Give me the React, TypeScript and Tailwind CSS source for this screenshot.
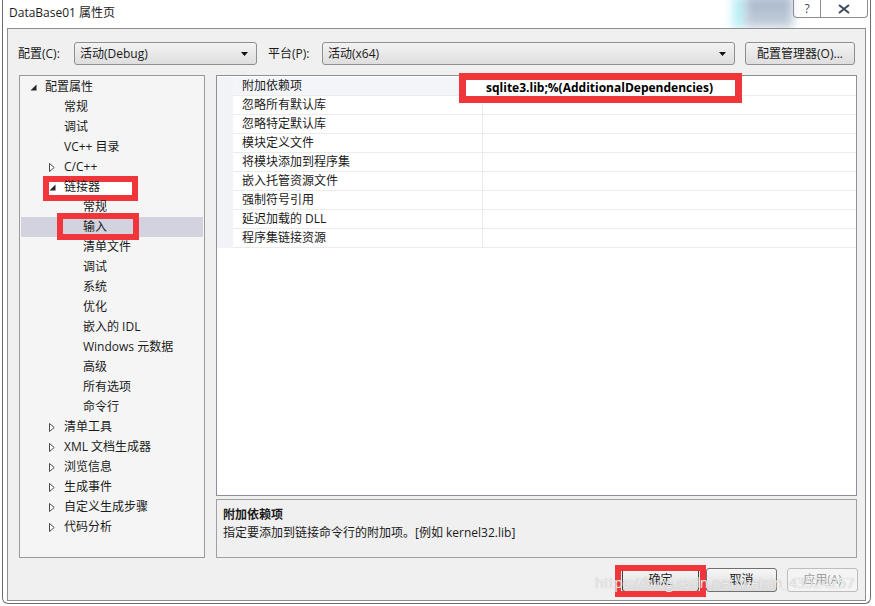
import React from "react";

type TreeNode = {
  label: string;
  level: 0 | 1 | 2;
  arrow?: "open" | "closed";
  selected?: boolean;
};

const tree: TreeNode[] = [
  { label: "配置属性", level: 0, arrow: "open" },
  { label: "常规", level: 1 },
  { label: "调试", level: 1 },
  { label: "VC++ 目录", level: 1 },
  { label: "C/C++", level: 1, arrow: "closed" },
  { label: "链接器", level: 1, arrow: "open" },
  { label: "常规", level: 2 },
  { label: "输入", level: 2, selected: true },
  { label: "清单文件", level: 2 },
  { label: "调试", level: 2 },
  { label: "系统", level: 2 },
  { label: "优化", level: 2 },
  { label: "嵌入的 IDL", level: 2 },
  { label: "Windows 元数据", level: 2 },
  { label: "高级", level: 2 },
  { label: "所有选项", level: 2 },
  { label: "命令行", level: 2 },
  { label: "清单工具", level: 1, arrow: "closed" },
  { label: "XML 文档生成器", level: 1, arrow: "closed" },
  { label: "浏览信息", level: 1, arrow: "closed" },
  { label: "生成事件", level: 1, arrow: "closed" },
  { label: "自定义生成步骤", level: 1, arrow: "closed" },
  { label: "代码分析", level: 1, arrow: "closed" },
];

const props = [
  "附加依赖项",
  "忽略所有默认库",
  "忽略特定默认库",
  "模块定义文件",
  "将模块添加到程序集",
  "嵌入托管资源文件",
  "强制符号引用",
  "延迟加载的 DLL",
  "程序集链接资源",
];

const indent = ["pl-[9px]", "pl-[28px]", "pl-[47px]"];

function Arrow({ kind }: { kind?: "open" | "closed" }) {
  if (kind === "open")
    return (
      <svg width="7" height="7" viewBox="0 0 7 7">
        <polygon points="6.5,0.5 6.5,6.5 0.5,6.5" fill="#262626" />
      </svg>
    );
  if (kind === "closed")
    return (
      <svg width="6" height="9" viewBox="0 0 6 9">
        <polygon points="0.5,0.5 5.2,4.5 0.5,8.5" fill="#fff" stroke="#4a4a4a" />
      </svg>
    );
  return null;
}

function Combo({ text, className }: { text: string; className: string }) {
  return (
    <div
      className={`flex h-[23px] items-center justify-between rounded-[3px] border border-[#8e8f8f] bg-gradient-to-b from-[#f3f3f3] to-[#dedede] pl-[5px] pr-[8px] ${className}`}
    >
      <span>{text}</span>
      <svg width="7" height="4" viewBox="0 0 7 4">
        <polygon points="0,0 7,0 3.5,4" fill="#111" />
      </svg>
    </div>
  );
}

export default function App() {
  return (
    <div className="relative h-[606px] w-[875px] overflow-hidden bg-white font-['Open_Sans','Noto_Sans_CJK_SC',sans-serif] text-[12px] leading-none text-[#1a1a1a]">
      {/* aero glass showing through behind the caption buttons */}
      <div className="absolute left-[732px] top-[-4px] h-[32px] w-[14px] bg-[#bdf1f6] blur-[4px]" />
      <div className="absolute left-[745px] top-[-4px] h-[32px] w-[48px] bg-gradient-to-b from-[#8fa3bd] to-[#b9c5d4] opacity-80 blur-[5px]" />

      <div className="relative ml-[2px] flex h-[604px] w-[869px] flex-col rounded-b-[6px] border-x border-b border-[#6d6d6d]">
        {/* title bar */}
        <div className="flex h-[28px] items-start justify-between pl-[6px]">
          <span className="mt-[7px] text-[12px]">DataBase01 属性页</span>
          <div className="relative mr-[2px] flex h-[18px] w-[75px] rounded-b-[4px] border-x border-b border-[#8a8d94] bg-white/60 text-[#3d4a5c]">
            <div className="flex w-[27px] items-center justify-center border-r border-[#8a8d94] text-[12px]">?</div>
            <div className="flex flex-1 items-center justify-center">
              <svg width="12" height="10" viewBox="0 0 12 10">
                <path d="M1 1 L11 9 M11 1 L1 9" stroke="#3d4a5c" strokeWidth="2" fill="none" />
              </svg>
            </div>
          </div>
        </div>

        {/* client area */}
        <div className="relative ml-[4px] flex h-[573px] w-[859px] flex-col border border-[#8e8f8f] bg-[#f0f0f0]">
          <div className="mt-[13px] flex h-[23px] items-center pl-[10px]">
            <span className="w-[56px]">配置(C):</span>
            <Combo text="活动(Debug)" className="w-[183px]" />
            <span className="ml-[11px] w-[54px]">平台(P):</span>
            <Combo text="活动(x64)" className="w-[413px]" />
            <div className="ml-[10px] flex h-[23px] w-[110px] items-center justify-center rounded-[3px] border border-[#8e8f8f] bg-gradient-to-b from-[#f3f3f3] to-[#dedede]">
              配置管理器(O)...
            </div>
          </div>

          <div className="mt-[10px] flex h-[483px] pl-[11px]">
            {/* category tree */}
            <div className="relative w-[186px] border border-[#9a9a9a] bg-[#f5f5f5] pt-[1px]">
              <div className="absolute left-[23px] top-[100px] h-[25px] w-[95px] border-[6px] border-[#f0363a] bg-white" />
              {tree.map((n, i) => (
                <div
                  key={i}
                  className={`relative ml-[1px] mr-[1px] flex h-[20px] items-center ${indent[n.level]} ${
                    n.selected ? "bg-[#d2d3de]" : ""
                  }`}
                >
                  <span className="flex w-[15px] items-center">
                    <Arrow kind={n.arrow} />
                  </span>
                  <span>{n.label}</span>
                </div>
              ))}
              <div className="absolute left-[37px] top-[137px] h-[27px] w-[82px] border-[6px] border-[#f0363a]" />
            </div>

            <div className="ml-[11px] flex w-[641px] flex-col">
              {/* property grid */}
              <div className="relative h-[421px] border border-[#8a8f98] bg-white pt-[1px]">
                {props.map((p, i) => (
                  <div key={p} className="flex h-[19px] items-stretch">
                    <div className="w-[16px] bg-[#f1f3f7]" />
                    <div
                      className={`flex w-[250px] items-center border-b border-r border-[#ececec] pl-[9px] ${
                        i === 0 ? "bg-[#f3f5f9]" : ""
                      }`}
                    >
                      {p}
                    </div>
                    <div className="flex-1 border-b border-[#ececec]" />
                  </div>
                ))}
                <div className="absolute left-[242px] top-[-3px] flex h-[30px] w-[283px] items-center border-[7px] border-[#f0363a] bg-white pl-[20px] text-[12px] font-bold text-black">
                  sqlite3.lib;%(AdditionalDependencies)
                </div>
              </div>

              {/* description */}
              <div className="mt-[3px] h-[59px] border border-[#a0a0a0] bg-[#f0f0f0] pl-[6px] pt-[6px] leading-[18px]">
                <div className="font-bold">附加依赖项</div>
                <div>指定要添加到链接命令行的附加项。[例如 kernel32.lib]</div>
              </div>
            </div>
          </div>

          {/* dialog buttons */}
          <div className="relative mt-[10px] flex h-[24px] justify-end pr-[7px]">
            <div className="flex w-[77px] items-center justify-center rounded-[3px] border border-[#3c3c3c] bg-gradient-to-b from-[#f6f6f6] to-[#dcdcdc]">
              确定
            </div>
            <div className="ml-[7px] flex w-[71px] items-center justify-center rounded-[3px] border border-[#707070] bg-gradient-to-b from-[#f6f6f6] to-[#dcdcdc]">
              取消
            </div>
            <div className="ml-[10px] flex w-[71px] items-center justify-center rounded-[3px] border border-[#bdbdbd] bg-[#f4f4f4] text-[#9d9d9d]">
              应用(A)
            </div>
            <div className="absolute left-[607px] top-[-3px] h-[32px] w-[91px] border-[6px] border-[#f0363a]" />
          </div>
        </div>
      </div>

      {/* blog watermark */}
      <div className="pointer-events-none absolute left-[595px] top-[576px] text-[14px] tracking-[0.2px] text-white/80 [text-shadow:0_0_1px_#9a9a9a]">
        https://blog.csdn.net/weixin_43524257
      </div>
    </div>
  );
}
